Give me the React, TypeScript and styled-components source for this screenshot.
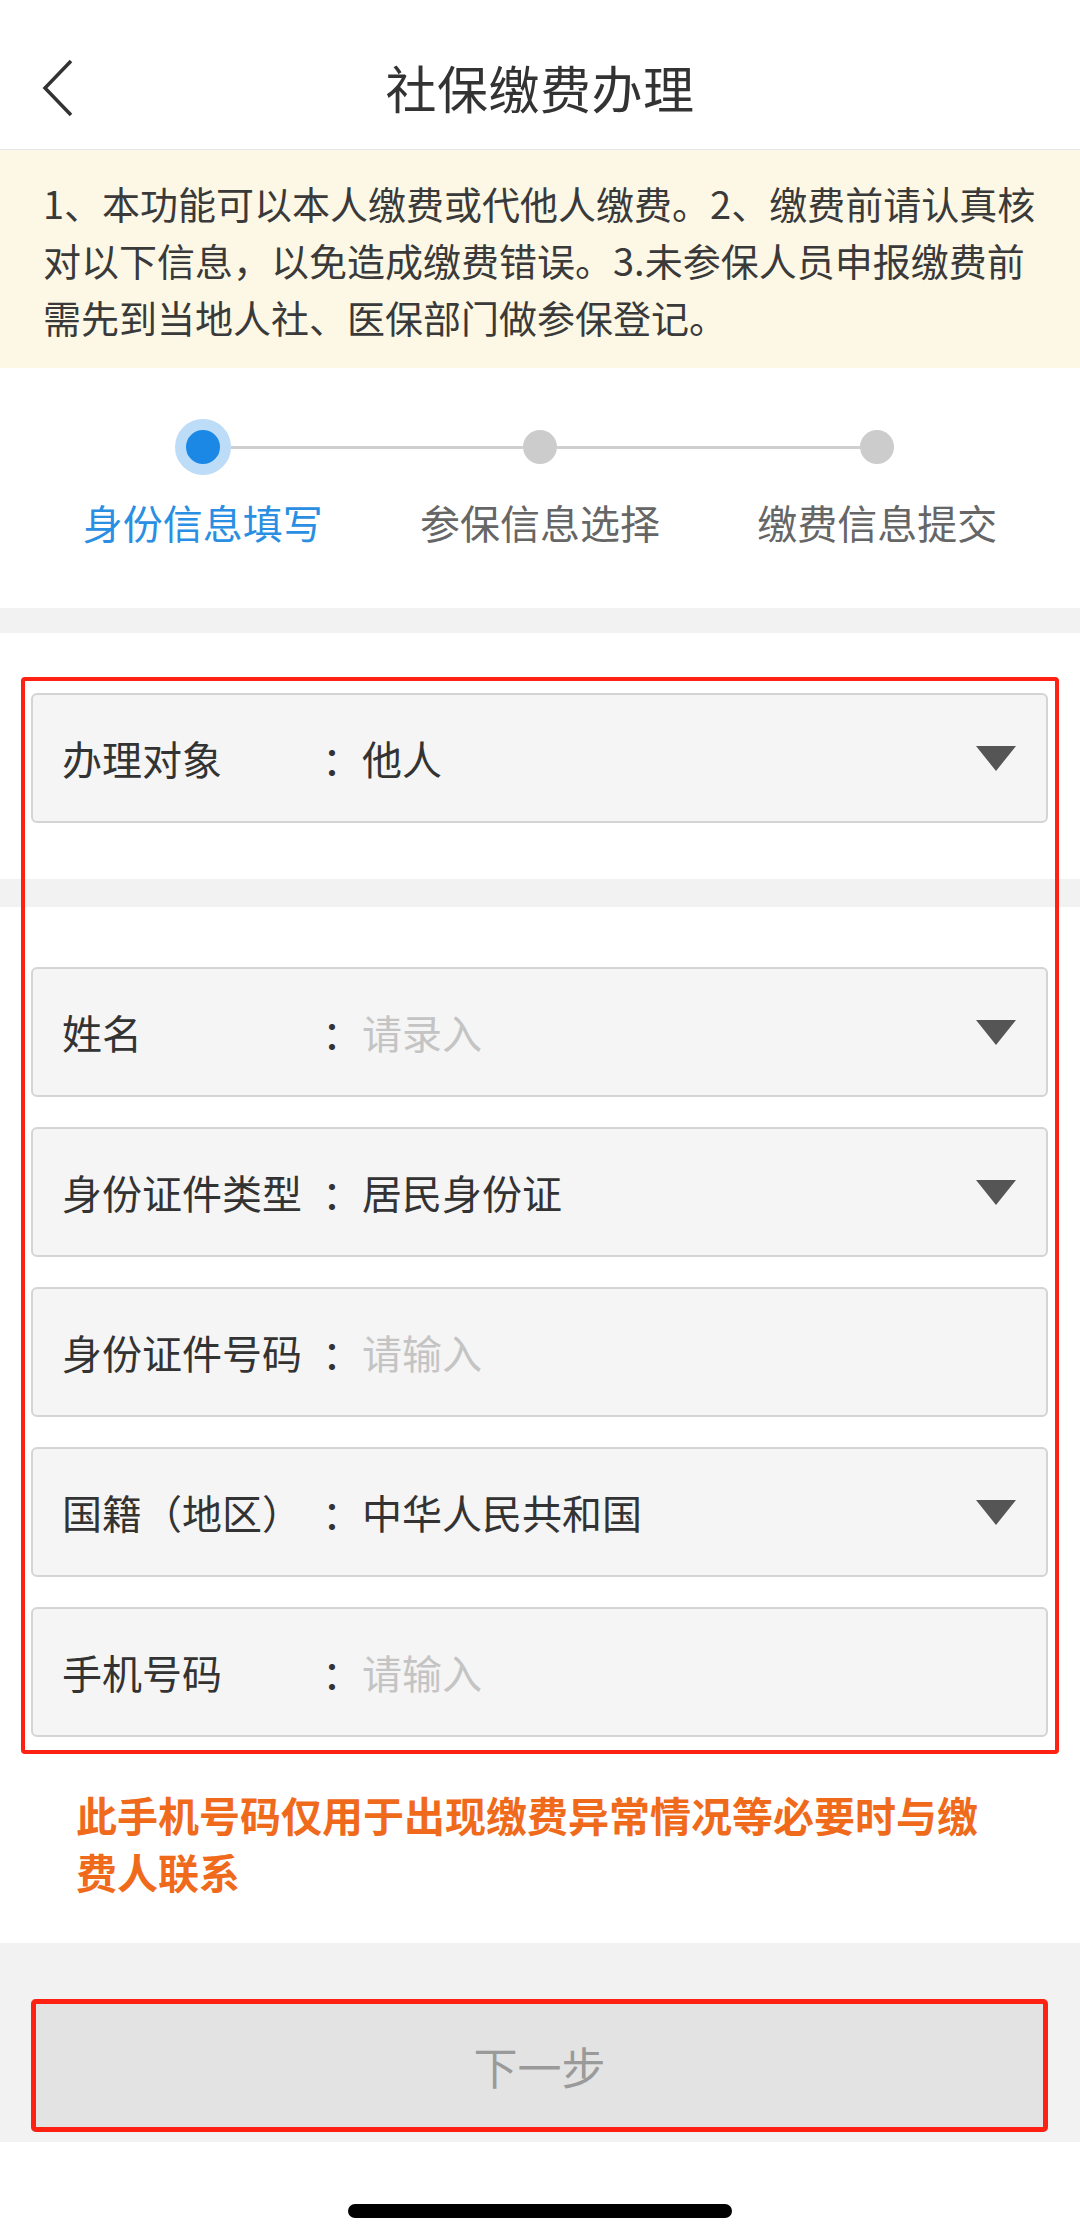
import React from "react";
import styled, { createGlobalStyle } from "styled-components";

const GlobalStyle = createGlobalStyle`
  html, body {
    margin: 0;
    padding: 0;
    background: #ffffff;
    font-family: "Noto Sans CJK SC", "Noto Sans", sans-serif;
    color: #333;
  }
  * { box-sizing: border-box; }
`;

const Page = styled.div`
  width: 1080px;
  min-height: 2240px;
  display: flex;
  flex-direction: column;
  background: #fff;
`;

const Header = styled.header`
  height: 150px;
  display: flex;
  align-items: center;
  justify-content: center;
  position: relative;
  border-bottom: 1px solid #e6e6e6;
  padding-top: 24px;
`;

const BackBtn = styled.button`
  position: absolute;
  left: 40px;
  top: 58px;
  width: 36px;
  height: 60px;
  border: none;
  background: none;
  padding: 0;
`;

const Title = styled.h1`
  margin: 0;
  font-size: 51px;
  font-weight: 400;
  color: #333;
  letter-spacing: 0.5px;
`;

const Notice = styled.div`
  background: #fdf8e6;
  padding: 24px 30px 23px 43px;
  font-size: 38px;
  line-height: 57px;
  color: #3a3a3a;
`;

const Stepper = styled.div`
  display: grid;
  grid-template-columns: repeat(3, 1fr);
  padding: 51px 34px 58px;
`;

const Step = styled.div`
  display: flex;
  flex-direction: column;
  align-items: center;
`;

const Track = styled.div`
  width: 100%;
  height: 56px;
  display: flex;
  align-items: center;
`;

const Line = styled.div<{ $hidden?: boolean }>`
  flex: 1;
  height: 3px;
  background: ${(p) => (p.$hidden ? "transparent" : "#cfcfcf")};
`;

const Dot = styled.div<{ $active?: boolean }>`
  width: ${(p) => (p.$active ? "56px" : "34px")};
  height: ${(p) => (p.$active ? "56px" : "34px")};
  border-radius: 50%;
  background: ${(p) => (p.$active ? "#1c88e6" : "#cccccc")};
  border: ${(p) => (p.$active ? "11px solid #bcdcf7" : "none")};
  flex-shrink: 0;
`;

const StepLabel = styled.div<{ $active?: boolean }>`
  margin-top: 19px;
  font-size: 40px;
  line-height: 56px;
  color: ${(p) => (p.$active ? "#2a8fe2" : "#666")};
`;

const Band = styled.div<{ $h: number }>`
  height: ${(p) => p.$h}px;
  background: #f2f2f2;
`;

const FormArea = styled.div`
  position: relative;

  &::after {
    content: "";
    position: absolute;
    top: 44px;
    left: 21px;
    right: 21px;
    bottom: -17px;
    border: 4px solid #ff2213;
    border-radius: 4px;
    pointer-events: none;
  }
`;

const FieldBlock = styled.div<{ $pb: number }>`
  display: flex;
  flex-direction: column;
  gap: 30px;
  padding: 60px 32px ${(p) => p.$pb}px 31px;
  background: #fff;
`;

const FieldBox = styled.div`
  height: 130px;
  border: 2px solid #d4d4d4;
  border-radius: 6px;
  background: #f5f5f5;
  display: flex;
  align-items: center;
  padding: 0 30px 0 29px;
  font-size: 40px;
`;

const Label = styled.span`
  width: 248px;
  color: #333;
  white-space: nowrap;
`;

const Colon = styled.span`
  width: 40px;
  padding-left: 12px;
  color: #333;
`;

const Value = styled.span<{ $placeholder?: boolean }>`
  flex: 1;
  margin-left: 12px;
  color: ${(p) => (p.$placeholder ? "#c4c4c4" : "#333")};
`;

const Note = styled.p`
  margin: 49px 0 0;
  padding: 0 80px 43px 76px;
  font-size: 41px;
  line-height: 57px;
  font-weight: 700;
  color: #f06a1c;
`;

const ActionBar = styled.div`
  background: #f2f2f2;
  padding: 56px 32px 10px 31px;
`;

const NextButton = styled.button`
  position: relative;
  width: 100%;
  height: 133px;
  border: 2px solid #cfcfcf;
  border-radius: 4px;
  background: #e3e3e3;
  color: #9a9a9a;
  font-family: inherit;
  font-size: 44px;

  &::after {
    content: "";
    position: absolute;
    inset: -2px;
    border: 5px solid #ff2213;
    border-radius: 5px;
  }
`;

const HomeBar = styled.div`
  height: 98px;
  display: flex;
  justify-content: center;
  padding-top: 62px;

  &::before {
    content: "";
    width: 384px;
    height: 14px;
    border-radius: 7px;
    background: #000;
  }
`;

const Caret = () => (
  <svg width="40" height="25" viewBox="0 0 40 25">
    <polygon points="0,0 40,0 20,25" fill="#555" />
  </svg>
);

type FieldProps = {
  label: string;
  value?: string;
  placeholder?: string;
  dropdown?: boolean;
};

const Field = ({ label, value, placeholder, dropdown }: FieldProps) => (
  <FieldBox>
    <Label>{label}</Label>
    <Colon>：</Colon>
    <Value $placeholder={!value}>{value || placeholder}</Value>
    {dropdown && <Caret />}
  </FieldBox>
);

const steps = ["身份信息填写", "参保信息选择", "缴费信息提交"];

export default function App() {
  return (
    <Page>
      <GlobalStyle />
      <Header>
        <BackBtn aria-label="返回">
          <svg width="36" height="60" viewBox="0 0 36 60">
            <polyline points="31,3 5,30 31,57" fill="none" stroke="#333" strokeWidth="3.5" />
          </svg>
        </BackBtn>
        <Title>社保缴费办理</Title>
      </Header>

      <Notice>
        1、本功能可以本人缴费或代他人缴费。2、缴费前请认真核对以下信息，以免造成缴费错误。3.未参保人员申报缴费前需先到当地人社、医保部门做参保登记。
      </Notice>

      <Stepper>
        {steps.map((s, i) => (
          <Step key={s}>
            <Track>
              <Line $hidden={i === 0} />
              <Dot $active={i === 0} />
              <Line $hidden={i === steps.length - 1} />
            </Track>
            <StepLabel $active={i === 0}>{s}</StepLabel>
          </Step>
        ))}
      </Stepper>

      <Band $h={25} />

      <FormArea>
        <FieldBlock $pb={56}>
          <Field label="办理对象" value="他人" dropdown />
        </FieldBlock>
        <Band $h={28} />
        <FieldBlock $pb={0}>
          <Field label="姓名" placeholder="请录入" dropdown />
          <Field label="身份证件类型" value="居民身份证" dropdown />
          <Field label="身份证件号码" placeholder="请输入" />
          <Field label="国籍（地区）" value="中华人民共和国" dropdown />
          <Field label="手机号码" placeholder="请输入" />
        </FieldBlock>
      </FormArea>

      <Note>此手机号码仅用于出现缴费异常情况等必要时与缴费人联系</Note>

      <ActionBar>
        <NextButton>下一步</NextButton>
      </ActionBar>

      <HomeBar />
    </Page>
  );
}
